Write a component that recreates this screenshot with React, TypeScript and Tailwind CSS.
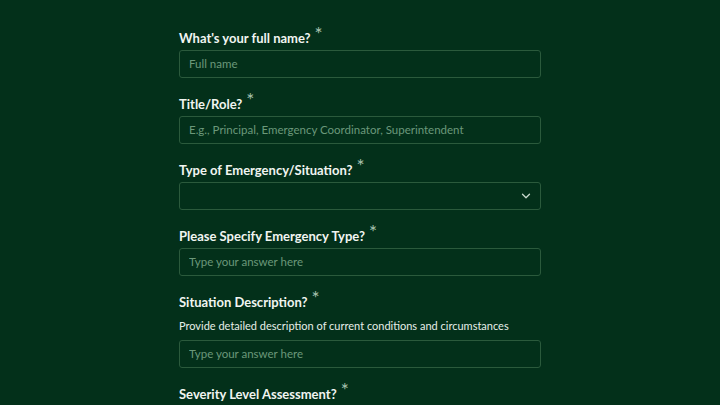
import { ChevronDown } from 'lucide-react'

type Field = {
  label: string
  hint?: string
  placeholder?: string
  select?: boolean
}

const fields: Field[] = [
  { label: "What's your full name?", placeholder: 'Full name' },
  { label: 'Title/Role?', placeholder: 'E.g., Principal, Emergency Coordinator, Superintendent' },
  { label: 'Type of Emergency/Situation?', select: true },
  { label: 'Please Specify Emergency Type?', placeholder: 'Type your answer here' },
  {
    label: 'Situation Description?',
    hint: 'Provide detailed description of current conditions and circumstances',
    placeholder: 'Type your answer here',
  },
]

function Label({ text }: { text: string }) {
  return (
    <label className="flex items-start h-5 text-[13px] leading-5 font-bold text-[#f1f5f1]">
      {text}
      <span className="ml-1 -mt-[4px] text-[19px] leading-5 font-normal text-[#a9c4b1]">*</span>
    </label>
  )
}

export default function App() {
  return (
    <div
      className="min-h-screen bg-[#03301a] overflow-hidden"
      style={{ fontFamily: 'Lato, "Open Sans", sans-serif' }}
    >
      <div className="w-[362px] mx-auto pt-7 flex flex-col gap-4">
        {fields.map((f) => (
          <div key={f.label} className="flex flex-col">
            <Label text={f.label} />
            {f.hint && (
              <p className="mt-1.5 mb-1 text-[11px] leading-4 text-[#e6eee8]">{f.hint}</p>
            )}
            <div className="mt-0.5 h-7 rounded-[3px] border border-[#2b5a3c] bg-[#03301a] flex items-center pl-[9px] pr-[7px]">
              {f.select ? (
                <div className="flex-1 flex justify-end">
                  <ChevronDown className="w-3.5 h-3.5 text-[#c9d9cd]" strokeWidth={2.25} />
                </div>
              ) : (
                <input
                  readOnly
                  placeholder={f.placeholder}
                  className="w-full bg-transparent outline-none text-[11.5px] text-white placeholder:text-[#6b987a]"
                />
              )}
            </div>
          </div>
        ))}
        <Label text="Severity Level Assessment?" />
      </div>
    </div>
  )
}
